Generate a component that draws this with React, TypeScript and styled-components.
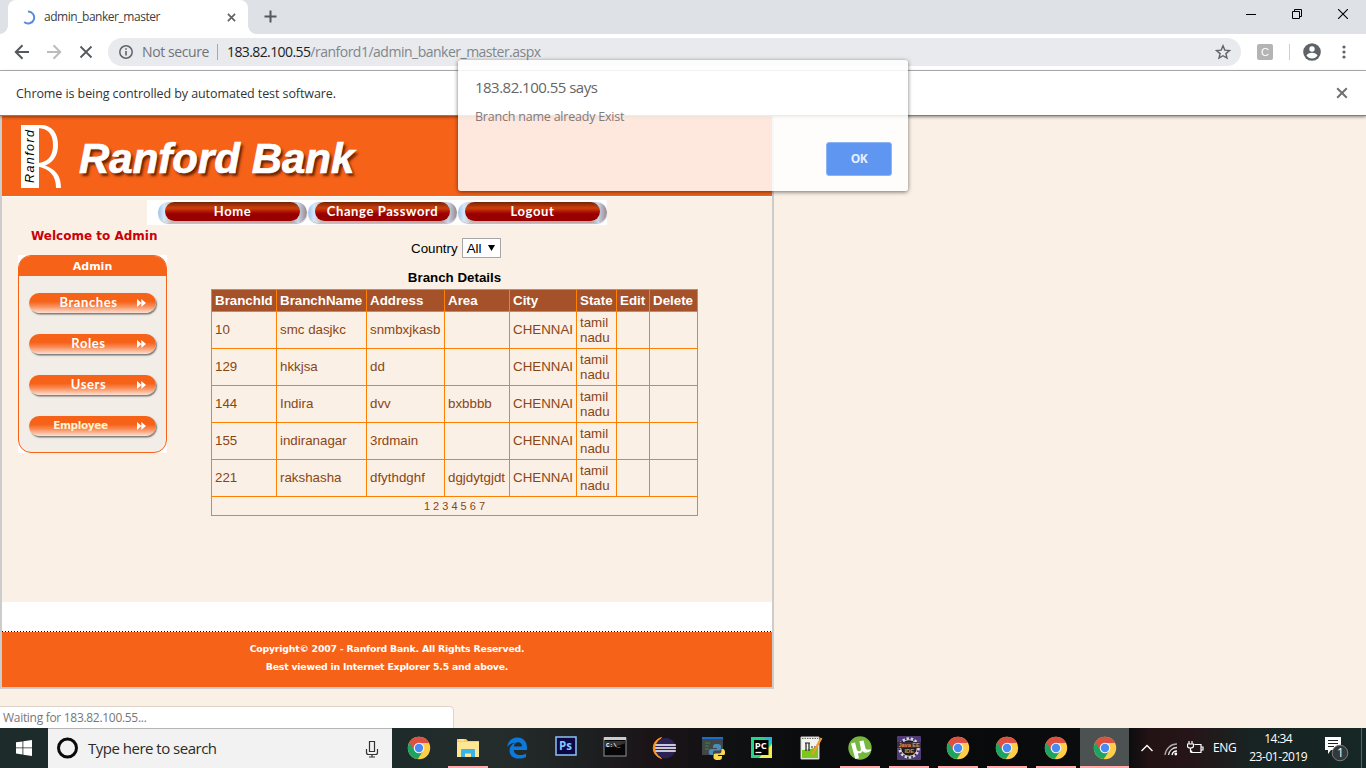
import React from "react";
import styled, { createGlobalStyle, css } from "styled-components";

const ui = `"Open Sans", "Noto Sans", sans-serif`;
const arial = `"Liberation Sans", Arial, sans-serif`;
const verdana = `"DejaVu Sans", Verdana, sans-serif`;
const gothic = `Lato, "Open Sans", sans-serif`;

const GlobalStyle = createGlobalStyle`
  *, *::before, *::after { box-sizing: border-box; }
  body { margin: 0; background: #faf0e6; }
  svg { display: block; flex: none; }
`;

const Screen = styled.div`
  position: relative;
  width: 1366px;
  height: 768px;
  overflow: hidden;
  display: flex;
  flex-direction: column;
  background: #faf0e6;
  font-family: ${ui};
`;

const Label = styled.span<{ size: number; color?: string; track?: number; weight?: number }>`
  font-size: ${(p) => p.size}px;
  color: ${(p) => p.color ?? "#3c4043"};
  letter-spacing: ${(p) => p.track ?? 0}px;
  font-weight: ${(p) => p.weight ?? 400};
  line-height: 20px;
  white-space: nowrap;
`;

/* ---------- browser chrome ---------- */

const TabStrip = styled.div`
  height: 34px;
  flex: none;
  display: flex;
  background: #dee1e6;
  padding-left: 8px;
`;

const Tab = styled.div`
  position: relative;
  width: 240px;
  height: 34px;
  display: flex;
  align-items: center;
  padding: 0 12px 0 13px;
  border-radius: 8px 8px 0 0;
  background: #fff;
  &::before,
  &::after {
    content: "";
    position: absolute;
    bottom: 0;
    width: 8px;
    height: 8px;
  }
  &::before { left: -8px; background: radial-gradient(circle at 0 0, transparent 7.5px, #fff 8px); }
  &::after { right: -8px; background: radial-gradient(circle at 100% 0, transparent 7.5px, #fff 8px); }
`;

const TabTitle = styled(Label)`
  flex: 1;
  margin-left: 8px;
`;

const NewTab = styled.div`
  padding: 10px 0 0 16px;
  flex: 1;
`;

const WindowButtons = styled.div`
  display: flex;
  gap: 36px;
  padding: 9px 18px 0 0;
`;

const Toolbar = styled.div`
  height: 37px;
  flex: none;
  display: flex;
  align-items: center;
  background: #fff;
  border-bottom: 1px solid #b4b5b6;
  padding-left: 14px;
`;

const NavIcons = styled.div`
  display: flex;
  gap: 16px;
  width: 94px;
`;

const Omnibox = styled.div`
  width: 1133px;
  height: 28px;
  display: flex;
  align-items: center;
  border-radius: 14px;
  background: #e8eaed;
  padding: 0 10px 0 10px;
`;

const Divider = styled.i<{ tone: string }>`
  width: 1px;
  height: 16px;
  background: ${(p) => p.tone};
`;

const AddressDivider = styled(Divider)`
  margin: 0 9px 0 8px;
`;

const Address = styled.div`
  flex: 1;
  display: flex;
  align-items: center;
  padding-left: 8px;
`;

const ToolbarEnd = styled.div`
  flex: 1;
  display: flex;
  align-items: center;
  padding-left: 16px;
`;

const Avatar = styled.svg`
  margin: 0 16px 0 13px;
`;

const Extension = styled.span`
  width: 16px;
  height: 16px;
  border-radius: 2px;
  background: #b4b4b4;
  color: #fff;
  font: 11px/16px ${arial};
  text-align: center;
  margin-right: 16px;
`;

const InfoBar = styled.div`
  height: 45px;
  flex: none;
  display: flex;
  align-items: center;
  justify-content: space-between;
  background: #fff;
  border-bottom: 1px solid #7f7f7f;
  padding: 0 18px 0 16px;
  z-index: 1;
  box-shadow: 0 1px 3px rgba(0, 0, 0, 0.45);
`;

const InfoText = styled(Label)`
  padding-top: 1px;
`;

/* ---------- bank site ---------- */

const Viewport = styled.div`
  flex: 1;
  min-height: 0;
  background: #faf0e6;
`;

const Site = styled.div`
  width: 774px;
  height: 573px;
  display: flex;
  flex-direction: column;
  border: 2px solid #ccc;
  border-top: 0;
  background: #faf0e6;
`;

const Banner = styled.div`
  height: 81px;
  flex: none;
  display: flex;
  background: #f66218;
  border-bottom: 1px solid #fff;
  padding: 9px 0 0 18px;
`;

const BankName = styled.h1`
  margin: 0 0 0 17px;
  padding-top: 10px;
  font: italic bold 42px/48px ${arial};
  color: #fff;
  -webkit-text-stroke: 0.7px #fff;
  text-shadow: 2.5px 2.5px 2.5px rgba(70, 20, 0, 0.8);
  white-space: nowrap;
`;

const Body = styled.div`
  height: 405px;
  flex: none;
  display: flex;
`;

const Side = styled.div`
  width: 145px;
  flex: none;
  padding: 29px 0 0 16px;
`;

const Welcome = styled.p`
  margin: 0 0 0 13px;
  font: bold 12px/20px ${verdana};
  color: #cb0008;
  white-space: nowrap;
`;

const MenuBack = styled.div`
  width: 149px;
  height: 198px;
  margin-top: 9px;
  background: #fff;
`;

const Menu = styled.div`
  height: 198px;
  border: 1px solid #f66218;
  border-radius: 13px;
  overflow: hidden;
  background: #f2ede7;
`;

const MenuTitle = styled.div`
  height: 20px;
  background: #f66218;
  color: #fff;
  font: bold 11px/21px ${verdana};
  text-align: center;
`;

const MenuItems = styled.div`
  display: flex;
  flex-direction: column;
  gap: 21px;
  padding: 17px 0 0 10px;
`;

const MenuButton = styled.div<{ cream?: boolean }>`
  width: 127px;
  height: 20px;
  display: flex;
  align-items: center;
  border-radius: 10px;
  background: linear-gradient(#f66218 0%, #f66218 42%, #f88a54 65%, #fde0d2 100%);
  box-shadow: 1px 1.5px 1.5px #777;
  color: ${(p) => (p.cream ? "#fff3d0" : "#fff")};
  padding-right: 10px;
  ${(p) =>
    p.cream
      ? css`font: bold 10.5px/16px ${verdana}; letter-spacing: -0.35px;`
      : css`font: 700 13px/18px ${gothic}; letter-spacing: 0.6px;`}
`;

const MenuLabel = styled.span<{ shift: number }>`
  flex: 1;
  text-align: center;
  padding-left: ${(p) => Math.max(p.shift, 0)}px;
  padding-right: ${(p) => Math.max(-p.shift, 0)}px;
  padding-bottom: 2px;
`;

const Main = styled.div`
  flex: 1;
  display: flex;
  flex-direction: column;
`;

const TopNav = styled.div`
  width: 460px;
  height: 25px;
  margin-top: 3px;
  display: flex;
  background: #fff;
  padding: 2px 0 0 11px;
`;

const PillShell = styled.div`
  flex: none;
  width: 149px;
  margin-right: 1px;
  height: 21px;
  padding: 0 7px;
  border-radius: 11px;
  background: linear-gradient(90deg, #9cc2ec 0, #d7e8fa 6px, #c9b7b4 14px, #b9a5a2 134px, #c5d6ec 140px, #a08f92 148px);
  box-shadow: 0 1px 1px #bbb;
`;

const Pill = styled.div`
  width: 135px;
  height: 19px;
  border-radius: 10px;
  background: linear-gradient(#6e2406 0, #a83006 16%, #cc420a 32%, #a80c00 55%, #980000 65%, #980000 100%);
  color: #fff;
  font: 700 13px/18px ${gothic};
  letter-spacing: 0.6px;
  text-align: center;
  white-space: nowrap;
`;

const Filter = styled.div`
  display: flex;
  align-items: center;
  margin: 13px 0 0 264px;
  font: 13.333px/19px ${arial};
  color: #000;
`;

const Select = styled.div`
  width: 39px;
  height: 20px;
  display: flex;
  align-items: center;
  justify-content: space-between;
  margin-left: 4px;
  padding: 0 5px 0 4px;
  border: 1px solid #a6a6a6;
  background: #fff;
`;

const Grid = styled.table`
  width: 486px;
  margin: 9px 0 0 64px;
  table-layout: fixed;
  border-collapse: collapse;
  font: 13.333px/15px ${arial};
  color: #8b4513;
  caption {
    height: 22px;
    line-height: 21px;
    font-weight: bold;
    color: #000;
  }
  th,
  td {
    border: 1px solid #ff8000;
    padding: 0 3px;
    text-align: left;
  }
  td { padding-bottom: 1px; }
  th { background: #a55129; color: #fff; white-space: nowrap; }
`;

const Row = styled.tr<{ h: number }>`
  height: ${(p) => p.h}px;
`;

const Pager = styled.td`
  && { text-align: center; font-size: 11px; line-height: 12px; padding-bottom: 0; }
`;

const Gap = styled.div`
  height: 29px;
  flex: none;
  background: #fff;
`;

const Footer = styled.div`
  flex: 1;
  background: #f66218;
  color: #fff;
  font: bold 9.33px/18px ${verdana};
  letter-spacing: -0.2px;
  text-align: center;
  padding: 8px 0 0;
`;

const DottedLine = styled.div`
  height: 1px;
  flex: none;
  background: repeating-linear-gradient(90deg, #000 0 1px, #fff 1px 3px);
`;

const StatusBubble = styled.div`
  position: absolute;
  left: -1px;
  top: 706px;
  width: 455px;
  height: 23px;
  display: flex;
  align-items: center;
  padding-left: 3px;
  background: #fff;
  border: 1px solid #ddd3ca;
  border-radius: 0 4px 0 0;
`;

/* ---------- alert ---------- */

const Alert = styled.div`
  position: absolute;
  left: 458px;
  top: 60px;
  width: 450px;
  height: 131px;
  display: flex;
  flex-direction: column;
  padding: 18px 16px 15px 17px;
  border-radius: 3px;
  background: rgba(255, 255, 255, 0.85);
  box-shadow: 0 1px 4px rgba(0, 0, 0, 0.55);
  z-index: 2;
`;

const AlertTitle = styled(Label)`
  margin-top: -1px;
`;

const AlertOk = styled.button`
  align-self: flex-end;
  width: 66px;
  height: 34px;
  margin-top: auto;
  border: 1px solid #8db4f5;
  border-radius: 3px;
  background: #5f96f1;
  color: #e8f0fe;
  font: bold 12px/30px ${ui};
  letter-spacing: -0.4px;
  padding: 0;
`;

const AlertText = styled(Label)`
  margin-top: 10px;
`;

/* ---------- taskbar ---------- */

const Taskbar = styled.div`
  height: 40px;
  flex: none;
  display: flex;
  position: relative;
  background: linear-gradient(90deg, #1d2b2a 0, #1d2b2a 392px, #252d2c 500px, #1d1f20 590px, #1b1417 650px, #101113 730px, #0a0c0d 800px, #090a0b 1000px, #0c0d0e 1129px, #241315 1150px, #251518 1190px, #182322 1250px, #152726 1366px);
`;

const Start = styled.div`
  flex: none;
  width: 48px;
  padding: 12px 0 0 16px;
`;

const SearchBox = styled.div`
  flex: none;
  width: 344px;
  display: flex;
  align-items: center;
  background: #f2f2f2;
  border-top: 1px solid #b5b5b5;
  padding: 0 13px 0 8px;
`;

const SearchText = styled(Label)`
  flex: 1;
  margin: 0 0 2px 9px;
`;

const Apps = styled.div`
  flex: none;
  display: flex;
  margin-left: 2px;
`;

const TaskButton = styled.div<{ running?: boolean; active?: boolean }>`
  width: 49px;
  height: 40px;
  display: flex;
  justify-content: center;
  padding-top: 8px;
  ${(p) => p.running && css`background: linear-gradient(#ffabab, #ffabab) 50% 100% / 40px 2px no-repeat;`}
  ${(p) => p.active && css`background: linear-gradient(#ffabab, #ffabab) 0 100% / 49px 2px no-repeat #4c5252;`}
`;

const Tray = styled.div`
  flex: 1;
  min-width: 0;
  display: flex;
  align-items: center;
  padding-left: 11px;
`;

const TrayIcons = styled.div`
  flex: none;
  display: flex;
  align-items: center;
  gap: 9px;
  width: 73px;
`;

const Clock = styled.div`
  flex: none;
  width: 76px;
  margin: 0 8px 0 4px;
  display: flex;
  flex-direction: column;
  align-items: center;
  span { line-height: 18px; }
`;

const Peek = styled.i`
  width: 1px;
  height: 40px;
  margin-left: auto;
  margin-right: 4px;
  background: #59605f;
`;

/* ---------- drawings ---------- */

const Cross = ({ size, color, w = 1.8 }: { size: number; color: string; w?: number }) => (
  <svg width={size} height={size} viewBox="0 0 10 10">
    <path d="M1 1l8 8M9 1l-8 8" stroke={color} strokeWidth={(w * 10) / size} fill="none" />
  </svg>
);

const ArrowLeft = ({ color, flip }: { color: string; flip?: boolean }) => (
  <svg width="16" height="16" viewBox="0 0 16 16" transform={flip ? "scale(-1,1)" : undefined}>
    <path d="M15 8H2M8.5 1.3L1.8 8l6.7 6.7" fill="none" stroke={color} strokeWidth="2" />
  </svg>
);

const ChromeIcon = () => (
  <svg width="24" height="24" viewBox="0 0 24 24">
    <circle cx="12" cy="12" r="11.2" fill="#ffcd46" />
    <path d="M12 12L2.3 6.4A11.2 11.2 0 0 0 10.8 23.1L16.4 14.6z" fill="#1da462" />
    <path d="M2.3 6.4A11.2 11.2 0 0 1 22 7H12L7.6 14.6z" fill="#dd5144" />
    <circle cx="12" cy="12" r="5.3" fill="#f5f5f5" />
    <circle cx="12" cy="12" r="4.2" fill="#4a8af4" />
  </svg>
);

const FolderIcon = () => (
  <svg width="24" height="24" viewBox="0 0 24 24">
    <path d="M1 3h9l2 2h11v16H1z" fill="#f5cf60" />
    <path d="M1 6h22v15H1z" fill="#ffe694" />
    <path d="M3 4h5" stroke="#fff4c9" />
    <path d="M5 21v-7q0-1 1-1h12q1 0 1 1v7h-4v-3.5H9V21z" fill="#35b5ea" />
  </svg>
);

const EdgeIcon = () => (
  <svg width="24" height="24" viewBox="0 0 24 24">
    <path d="M2.2 11C3 5 7 1.5 12.5 1.5C18.500 1.500 22 6 22 11.500V14H8.700C8.900 17.500 11.700 19 15 19C17.400 19 19.300 18.400 21 17.400V21C19 22.100 16.700 22.600 14 22.600C8.200 22.600 4.500 19.500 4.500 14.500C4.500 11 6.500 8.300 9.800 6.700C6.700 6.900 4 8.400 2.200 11zM8.800 10.600H17C17 7.800 15.500 6.300 13 6.300C10.700 6.300 9.200 8 8.800 10.600z" fill="#0a7bdc" />
  </svg>
);

const PsIcon = () => (
  <svg width="22" height="22" viewBox="0 0 22 22">
    <rect x="1" y="1" width="20" height="18" fill="#0c0745" stroke="#8cc4f4" strokeWidth="1.5" />
    <text x="4" y="14" fontFamily="Open Sans" fontWeight="700" fontSize="11.5" fill="#86c5ff">Ps</text>
  </svg>
);

const CmdIcon = () => (
  <svg width="24" height="22" viewBox="0 0 24 22">
    <rect x="1" y="2" width="22" height="18" fill="#060606" stroke="#8f9393" />
    <rect x="1" y="1" width="22" height="3" fill="#c9cccc" />
    <path d="M1.500 11Q12 12 22.500 7V5h-21z" fill="#333" />
    <text x="3" y="10.500" fontFamily="Liberation Mono" fontWeight="700" fontSize="6" fill="#fff">C:\_</text>
  </svg>
);

const EclipseIcon = () => (
  <svg width="24" height="24" viewBox="0 0 24 24">
    <path d="M9.500 1.500A10.800 10.800 0 0 0 9.500 22.500A14 14 0 0 1 9.500 1.500z" fill="#f7941e" stroke="#f7941e" />
    <circle cx="13.500" cy="12" r="10.300" fill="#2c2255" />
    <path d="M3.500 9h20.300M3.200 12H24M3.500 15h20.300" stroke="#fff" strokeWidth="1.300" />
  </svg>
);

const PythonIcon = () => (
  <svg width="24" height="24" viewBox="0 0 24 24">
    <rect x="1" y="1" width="21" height="18" fill="#414746" />
    <rect x="1" y="1" width="21" height="2" fill="#1470cc" />
    <path d="M4 7h5M4 10h4M4 13h4" stroke="#3c8a45" />
    <path d="M16 8c-4 0-4 1.500-4 4h4v1h-6c-3 0-3 6 0 6h2v-2c0-2 1-2.500 3-2.500h3c1.500 0 2-1 2-2.500V10c0-1.500-2-2-4-2z" fill="#4b8bbe" />
    <path d="M17 24c4 0 4-1.500 4-4h-4v-1h6c2-1 1-6-1-6h-1.500v2c0 2-1 2.500-3 2.500h-3c-1.500 0-2 1-2 2.500v1.500c0 2 2 2.500 4.500 2.500z" fill="#ffd94d" />
  </svg>
);

const PyCharmIcon = () => (
  <svg width="23" height="23" viewBox="0 0 23 23">
    <path d="M1 1h15l6 6v15H1z" fill="#21d789" />
    <path d="M13 1h9v7z" fill="#1fb8e0" />
    <path d="M22 8v14H9z" fill="#f4ee4d" />
    <rect x="4" y="4" width="14.500" height="15" fill="#000" />
    <text x="4.700" y="12.500" fontFamily="Open Sans" fontWeight="700" fontSize="9.500" fill="#fff">PC</text>
    <path d="M5.500 16.500h6" stroke="#fff" strokeWidth="1.300" />
  </svg>
);

const NotepadIcon = () => (
  <svg width="24" height="24" viewBox="0 0 24 24">
    <path d="M2 1h18v22H2z" fill="#f3f4ee" stroke="#ccc" />
    <path d="M3 14Q12 14 19 10v12H3z" fill="#7cc71e" />
    <path d="M3 2.500h16" stroke="#666" strokeDasharray="1.500 1" />
    <path d="M7 7v8M10 7v8M6 7h5M12 11h2M15 11h2" stroke="#222" strokeWidth="1.200" />
    <path d="M22.500 2L14.500 16l-.8 2.500" stroke="#f29a2e" strokeWidth="2.200" fill="none" />
  </svg>
);

const TorrentIcon = () => (
  <svg width="24" height="24" viewBox="0 0 24 24">
    <circle cx="12" cy="12" r="11.700" fill="#76b83f" />
    <path d="M3 7.500l4-.9l1.800 7c.8 2.800 4.600 2 4-1.200l-1.400-7.100l4.200-.9l1.800 7.700c.4 1.600 1.900 2 5.300 1.100l.2 1.500c-3.500 2.500-6.900 2.700-8.300.3c-1.100 1.900-2.700 2.700-4.700 2.100l1 5.200l-3.600.6z" fill="#fff" />
  </svg>
);

const JavaIcon = () => (
  <svg width="24" height="24" viewBox="0 0 24 24">
    <rect width="24" height="24" rx="1" fill="#513a78" />
    <circle cx="12" cy="12" r="9.500" fill="#1d1b1f" stroke="#d9d9dc" strokeWidth="2.500" strokeDasharray="2.500 1.700" />
    <circle cx="12" cy="12" r="8.300" fill="#1d1b1f" stroke="#d9d9dc" />
    <path d="M0 6h24v6H0z" fill="#3a2b45" />
    <text x="1.500" y="11.300" fontFamily="Liberation Sans" fontWeight="700" fontSize="5.500" fill="#f08c3a">Java EE</text>
    <text x="7.500" y="17.300" fontFamily="Liberation Sans" fontWeight="700" fontSize="5.800" fill="#f08c3a">IDE</text>
  </svg>
);

const RanfordLogo = () => (
  <svg width="42" height="64" viewBox="0 0 42 64">
    <rect x="1" y="0" width="18" height="63" fill="#fff" />
    <path d="M18 0h3C32 0 38 8 38 20c0 12-6 18-13 20.500C35 44 41 50 41 63h-5C36 51 30 44 18 41.500V38c10-1 15-7 15-18C33 9 28 3.500 18 3z" fill="#fff" />
    <text transform="translate(14 58) rotate(-90)" fontFamily="Liberation Sans" fontStyle="italic" fontSize="12.500" textLength="53" fill="#000">Ranford</text>
  </svg>
);

const FastForward = () => (
  <svg width="9" height="8" viewBox="0 0 9 8">
    <path d="M0 0l4.500 4L0 8zM4.300 0L9 4L4.300 8z" fill="#fff" />
  </svg>
);

const rows = [
  ["10", "smc dasjkc", "snmbxjkasb", ""],
  ["129", "hkkjsa", "dd", ""],
  ["144", "Indira", "dvv", "bxbbbb"],
  ["155", "indiranagar", "3rdmain", ""],
  ["221", "rakshasha", "dfythdghf", "dgjdytgjdt"],
];
const headings = ["BranchId", "BranchName", "Address", "Area", "City", "State", "Edit", "Delete"];
const columns = [65, 90, 78, 65, 67, 40, 33, 48];

export default function App() {
  return (
    <Screen>
      <GlobalStyle />
      <TabStrip>
        <Tab>
          <svg width="15" height="15" viewBox="0 0 15 15">
            <path d="M7 1.500A6 6 0 1 1 3.200 12" fill="none" stroke="#5a8bd8" strokeWidth="2" />
          </svg>
          <TabTitle size={12} track={-0.46}>admin_banker_master</TabTitle>
          <Cross size={9} color="#5f6368" w={1.7} />
        </Tab>
        <NewTab>
          <svg width="13" height="13" viewBox="0 0 13 13">
            <path d="M6.500 .5v12M.5 6.500h12" stroke="#55585c" strokeWidth="2" />
          </svg>
        </NewTab>
        <WindowButtons>
          <svg width="10" height="10" viewBox="0 0 10 10"><path d="M0 5.500h10" stroke="#000" /></svg>
          <svg width="10" height="10" viewBox="0 0 10 10">
            <path d="M.5 2.500h7v7h-7zM2.500 2.500v-2h7v7h-2" fill="none" stroke="#000" />
          </svg>
          <svg width="10" height="10" viewBox="0 0 10 10"><path d="M0 0l10 10M10 0L0 10" stroke="#000" strokeWidth="1.100" /></svg>
        </WindowButtons>
      </TabStrip>
      <Toolbar>
        <NavIcons>
          <ArrowLeft color="#55585c" />
          <ArrowLeft color="#bbbcbe" flip />
          <svg width="16" height="16" viewBox="0 0 16 16">
            <path d="M2.500 2.500l11 11M13.500 2.500l-11 11" stroke="#55585c" strokeWidth="1.800" />
          </svg>
        </NavIcons>
        <Omnibox>
          <svg width="16" height="16" viewBox="0 0 16 16">
            <circle cx="8" cy="8" r="6.200" fill="none" stroke="#5f6368" strokeWidth="1.500" />
            <path d="M8 7v4.500M8 4.300v1.500" stroke="#5f6368" strokeWidth="1.600" />
          </svg>
          <Address>
            <Label size={14} color="#70757a" track={-0.4}>Not secure</Label>
            <AddressDivider tone="#a5a8ac" />
            <Label size={14} color="#202124" track={-0.6}>183.82.100.55</Label>
            <Label size={14} color="#80868b" track={-0.5}>/ranford1/admin_banker_master.aspx</Label>
          </Address>
          <svg width="16" height="16" viewBox="0 0 16 16">
            <path d="M8 1.800l1.800 4.300l4.700.4l-3.600 3.100l1.100 4.500L8 11.700l-4 2.400l1.100-4.500L1.500 6.500l4.700-.4z" fill="none" stroke="#5f6368" strokeWidth="1.400" />
          </svg>
        </Omnibox>
        <ToolbarEnd>
          <Extension>C</Extension>
          <Divider tone="#cdcfd1" />
          <Avatar width="18" height="18" viewBox="0 0 18 18">
            <circle cx="9" cy="9" r="8.800" fill="#5f6368" />
            <circle cx="9" cy="6" r="2.700" fill="#fff" />
            <path d="M3.500 12.500Q5 9.800 9 9.800t5.500 2.700Q12.500 15.500 9 15.500t-5.500-3z" fill="#fff" />
          </Avatar>
          <svg width="14" height="16" viewBox="0 0 14 16">
            <g fill="#5f6368"><circle cx="7" cy="3" r="1.600" /><circle cx="7" cy="8" r="1.600" /><circle cx="7" cy="13" r="1.600" /></g>
          </svg>
        </ToolbarEnd>
      </Toolbar>
      <InfoBar>
        <InfoText size={12.5} color="#333" track={-0.08}>Chrome is being controlled by automated test software.</InfoText>
        <Cross size={12} color="#6f7275" w={2} />
      </InfoBar>

      <Viewport>
        <Site>
          <Banner>
            <RanfordLogo />
            <BankName>Ranford Bank</BankName>
          </Banner>
          <Body>
            <Side>
              <Welcome>Welcome to Admin</Welcome>
              <MenuBack>
                <Menu>
                  <MenuTitle>Admin</MenuTitle>
                  <MenuItems>
                    <MenuButton><MenuLabel shift={11}>Branches</MenuLabel><FastForward /></MenuButton>
                    <MenuButton><MenuLabel shift={11}>Roles</MenuLabel><FastForward /></MenuButton>
                    <MenuButton><MenuLabel shift={11}>Users</MenuLabel><FastForward /></MenuButton>
                    <MenuButton cream><MenuLabel shift={-5}>Employee</MenuLabel><FastForward /></MenuButton>
                  </MenuItems>
                </Menu>
              </MenuBack>
            </Side>
            <Main>
              <TopNav>
                {["Home", "Change Password", "Logout"].map((t) => (
                  <PillShell key={t}><Pill>{t}</Pill></PillShell>
                ))}
              </TopNav>
              <Filter>
                Country
                <Select>
                  All
                  <svg width="7" height="6" viewBox="0 0 7 6"><path d="M0 0h7L3.500 6z" fill="#000" /></svg>
                </Select>
              </Filter>
              <Grid>
                <caption>Branch Details</caption>
                <colgroup>{columns.map((w, i) => <col key={i} width={w} />)}</colgroup>
                <tbody>
                  <Row h={22}>{headings.map((h) => <th key={h}>{h}</th>)}</Row>
                  {rows.map((r) => (
                    <Row h={37} key={r[0]}>
                      {r.map((c, i) => <td key={i}>{c}</td>)}
                      <td>CHENNAI</td>
                      <td>tamil nadu</td>
                      <td />
                      <td />
                    </Row>
                  ))}
                  <Row h={19}><Pager colSpan={8}>1 2 3 4 5 6 7</Pager></Row>
                </tbody>
              </Grid>
            </Main>
          </Body>
          <Gap />
          <DottedLine />
          <Footer>
            Copyright© 2007 - Ranford Bank. All Rights Reserved.
            <br />
            Best viewed in Internet Explorer 5.5 and above.
          </Footer>
        </Site>
      </Viewport>

      <StatusBubble>
        <Label size={12} color="#777" track={-0.3}>Waiting for 183.82.100.55...</Label>
      </StatusBubble>

      <Taskbar>
        <Start>
          <svg width="16" height="16" viewBox="0 0 16 16">
            <path d="M0 2.300L6.500 1.400V7.500H0zM7.300 1.200L16 0v7.500H7.300zM0 8.300h6.500v6.200L0 13.600zM7.300 8.300H16V16l-8.700-1.300z" fill="#fff" />
          </svg>
        </Start>
        <SearchBox>
          <svg width="23" height="23" viewBox="0 0 23 23">
            <circle cx="11.500" cy="11" r="9" fill="none" stroke="#0a0a0a" strokeWidth="3" />
          </svg>
          <SearchText size={15} color="#2b2b2b" track={-0.5}>Type here to search</SearchText>
          <svg width="14" height="18" viewBox="0 0 14 18">
            <path d="M4.500 1.500h5v10h-5zM1.500 9v3.500q0 2 2 2h7q2 0 2-2V9M7 14.500V17M4 17h6" fill="none" stroke="#333" strokeWidth="1.200" />
          </svg>
        </SearchBox>
        <Apps>
          <TaskButton><ChromeIcon /></TaskButton>
          <TaskButton running><FolderIcon /></TaskButton>
          <TaskButton><EdgeIcon /></TaskButton>
          <TaskButton><PsIcon /></TaskButton>
          <TaskButton><CmdIcon /></TaskButton>
          <TaskButton><EclipseIcon /></TaskButton>
          <TaskButton><PythonIcon /></TaskButton>
          <TaskButton><PyCharmIcon /></TaskButton>
          <TaskButton><NotepadIcon /></TaskButton>
          <TaskButton running><TorrentIcon /></TaskButton>
          <TaskButton running><JavaIcon /></TaskButton>
          <TaskButton running><ChromeIcon /></TaskButton>
          <TaskButton running><ChromeIcon /></TaskButton>
          <TaskButton running><ChromeIcon /></TaskButton>
          <TaskButton active><ChromeIcon /></TaskButton>
        </Apps>
        <Tray>
          <TrayIcons>
            <svg width="14" height="10" viewBox="0 0 14 10"><path d="M1.500 8L7 2.500L12.500 8" fill="none" stroke="#fff" strokeWidth="1.400" /></svg>
            <svg width="15" height="15" viewBox="0 0 15 15">
              <g fill="none" strokeWidth="1.300">
                <path d="M2 14A12 12 0 0 1 14 3" stroke="#aaa" />
                <path d="M5.500 14A8.500 8.500 0 0 1 14 6.500" stroke="#ddd" />
                <path d="M9 14A5 5 0 0 1 14 10" stroke="#fff" />
              </g>
              <circle cx="12.800" cy="13" r="1.400" fill="#fff" />
            </svg>
            <svg width="17" height="14" viewBox="0 0 17 14">
              <path d="M7.500 3.500h6.500v8H4.500V9.500M14.500 6h1.500v3h-1.500" fill="none" stroke="#fff" strokeWidth="1.200" />
              <path d="M2 0v3M5 0v3" stroke="#fff" strokeWidth="1.200" />
              <path d="M.5 3h6v2q0 2-3 2t-3-2zM3.500 7v4h2" fill="none" stroke="#fff" strokeWidth="1.200" />
            </svg>
          </TrayIcons>
          <Label size={12} color="#fff" track={-0.4}>ENG</Label>
          <Clock>
            <Label size={12} color="#fff" track={-0.55}>14:34</Label>
            <Label size={12} color="#fff" track={-0.45}>23-01-2019</Label>
          </Clock>
          <svg width="26" height="28" viewBox="0 0 26 28">
            <path d="M1 3h16v13H7l-3 4v-4H1z" fill="#fff" />
            <path d="M4 6.500h10M4 9.500h10M4 12.500h6" stroke="#1b2423" />
            <circle cx="16" cy="19" r="7.800" fill="#343838" stroke="#777c7c" />
            <text x="13" y="23.200" fontFamily="Open Sans" fontSize="12" fill="#fff">1</text>
          </svg>
          <Peek />
        </Tray>
      </Taskbar>

      <Alert>
        <AlertTitle size={15} color="#666" track={-0.52}>183.82.100.55 says</AlertTitle>
        <AlertText size={12.5} color="#857a7a" track={-0.21}>Branch name already Exist</AlertText>
        <AlertOk>OK</AlertOk>
      </Alert>
    </Screen>
  );
}
